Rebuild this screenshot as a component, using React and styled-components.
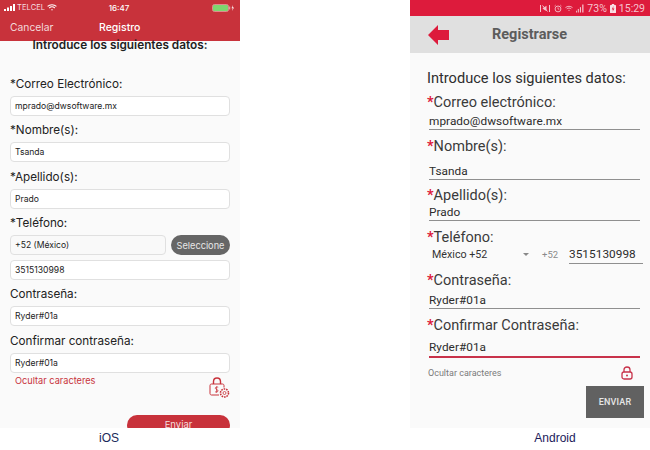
import React from "react";
import styled, { createGlobalStyle } from "styled-components";

const Global = createGlobalStyle`
  html, body { margin: 0; padding: 0; background: #fff; }
  #root { width: 650px; height: 450px; }
  * { box-sizing: border-box; }
`;

const Page = styled.div`
  width: 650px;
  height: 450px;
  display: flex;
  justify-content: space-between;
  overflow: hidden;
`;
const Column = styled.section`
  width: 240px;
  display: flex;
  flex-direction: column;
`;
const Screen = styled.div`
  height: 428px;
  background: #fafafa;
  overflow: hidden;
  display: flex;
  flex-direction: column;
`;
const Caption = styled.div`
  height: 22px;
  text-align: center;
  font: 12px/21px "Liberation Sans", Arial, sans-serif;
  color: ${p => p.$c};
  padding-right: ${p => p.$pr || 0}px;
  padding-left: ${p => p.$pl || 0}px;
`;

/* iOS */
const IosHeader = styled.header`
  height: 41px;
  background: #c8323b;
  color: #fff;
  flex: none;
  font-family: Inter, sans-serif;
`;
const IosStatus = styled.div`
  height: 14px;
  padding: 1px 6px 0 4px;
  display: grid;
  grid-template-columns: 1fr auto 1fr;
  align-items: center;
  font-size: 7.5px;
`;
const StatusLeft = styled.div`
  display: flex;
  align-items: center;
  gap: 2px;
  letter-spacing: 0.1px;
  color: #f6dfe0;
`;
const StatusTime = styled.div`
  font-weight: 500;
  font-size: 8px;
`;
const StatusRight = styled.div`
  display: flex;
  align-items: center;
  justify-content: flex-end;
`;
const IosNav = styled.div`
  height: 26px;
  padding: 0 0 0 10px;
  display: flex;
  align-items: center;
`;
const NavLink = styled.span`
  width: 89px;
  color: #f3d9da;
  font-size: 10.3px;
`;
const NavTitle = styled.span`
  font-weight: 500;
  font-size: 10.5px;
`;
const IosBody = styled.div`
  flex: 1;
  padding: 0 10px;
  font-family: Inter, sans-serif;
  color: #1f1f1f;
`;
const IosHeading = styled.h1`
  margin: -4px 0 0;
  font-size: 11.8px;
  line-height: 16px;
  font-weight: 600;
  text-align: center;
  height: 40px;
  white-space: nowrap;
`;
const IosField = styled.div`
  margin-top: ${p => p.$mt ?? 7}px;
`;
const IosLabel = styled.label`
  display: block;
  font-size: 11.7px;
  line-height: 15px;
  height: 19px;
  color: #222;
`;
const IosInput = styled.div`
  height: 20px;
  background: ${p => (p.$muted ? "#f9f9f9" : "#fff")};
  border: 1px solid #e0e0e0;
  border-radius: 4px;
  font-size: 8.6px;
  line-height: 18px;
  padding: 0 4px;
  flex: 1;
  color: #222;
  margin-top: ${p => p.$mt || 0}px;
`;
const PhoneRow = styled.div`
  display: flex;
  gap: 5px;
`;
const SelectBtn = styled.button`
  width: 59px;
  height: 20px;
  border: 0;
  border-radius: 10px;
  background: #666;
  color: #e6e6e6;
  font: 9.2px Inter, sans-serif;
  padding: 0;
  white-space: nowrap;
`;
const OptionRow = styled.div`
  display: flex;
  justify-content: space-between;
  padding-left: 5px;
  height: 41px;
  margin-top: 1px;
`;
const IosHide = styled.span`
  color: #c8323b;
  font-size: 9.2px;
  line-height: 14px;
`;
const LockSlot = styled.span`
  margin-top: 3px;
`;
const SendRow = styled.div`
  display: flex;
  justify-content: flex-end;
`;
const IosSend = styled.button`
  width: 103px;
  height: 20px;
  border: 0;
  background: #c8323b;
  color: #f5dcdd;
  border-radius: 10px;
  font: 9.5px/16px Inter, sans-serif;
  padding: 0;
`;

/* Android */
const AndStatus = styled.div`
  height: 16px;
  flex: none;
  background: #dd1b3c;
  color: #f6c4ce;
  display: flex;
  justify-content: flex-end;
  align-items: center;
  gap: 3px;
  padding-right: 5px;
  font: 10.5px Roboto, sans-serif;
`;
const AndBar = styled.header`
  height: 37px;
  flex: none;
  background: #e0e0e0;
  display: flex;
  align-items: center;
  padding-left: 18px;
`;
const AndTitle = styled.div`
  margin-left: 43px;
  font: 700 14.5px Roboto, sans-serif;
  color: #5c5c5c;
`;
const AndBody = styled.div`
  flex: 1;
  padding: 0 8px 0 17px;
  font-family: Roboto, sans-serif;
  color: #333;
`;
const AndHeading = styled.h1`
  margin: 17px 0 0;
  font-size: 14.6px;
  line-height: 17px;
  font-weight: 400;
  color: #2e2e2e;
`;
const AndField = styled.div`
  margin-top: ${p => p.$mt}px;
`;
const AndLabel = styled.label`
  display: block;
  font-size: 14.5px;
  line-height: 16px;
  height: 16px;
  color: #3a3a3a;
`;
const Star = styled.span`
  color: #dd1b3c;
  font-weight: 700;
`;
const AndValue = styled.div`
  margin: 0 2px;
  height: ${p => p.$h}px;
  padding-bottom: ${p => (p.$active ? 2 : 1)}px;
  border-bottom: ${p => (p.$active ? "2px solid #c8324a" : "1px solid #8f8f8f")};
  font-size: 11.8px;
  line-height: 14px;
  color: #2c2c2c;
  display: flex;
  align-items: flex-end;
  letter-spacing: 0.05px;
`;
const AndPhone = styled.div`
  display: grid;
  grid-template-columns: 96px 19px 27px 1fr;
  align-items: center;
  height: 19px;
  margin-top: -1px;
  font-size: 10.7px;
`;
const CountryName = styled.span`
  padding-left: 5px;
  color: #333;
`;
const Caret = styled.span`
  width: 0;
  height: 0;
  border-left: 3px solid transparent;
  border-right: 3px solid transparent;
  border-top: 3.5px solid #888;
`;
const Prefix = styled.span`
  color: #8a8a8a;
  font-size: 9.5px;
`;
const AndPhoneValue = styled.span`
  font-size: 11.8px;
  line-height: 18px;
  height: 19px;
  color: #2c2c2c;
  border-bottom: 1px solid #8f8f8f;
  letter-spacing: 0.05px;
  margin-right: -1px;
`;
const AndOptions = styled.div`
  display: flex;
  justify-content: space-between;
  align-items: center;
  height: 16px;
  margin-top: 7px;
  padding: 0 9px 0 1px;
`;
const AndHide = styled.span`
  font-size: 9px;
  color: #7a7a7a;
`;
const AndSendRow = styled.div`
  display: flex;
  justify-content: flex-end;
  margin: 5px -2px 0 0;
`;
const AndSend = styled.button`
  width: 58px;
  height: 32px;
  border: 0;
  background: #616161;
  color: #e6e6e6;
  font: 500 9px Roboto, sans-serif;
  letter-spacing: 0.2px;
  padding: 0;
`;

const Signal = ({ color = "#fff" }) => (
  <svg width="11" height="7" viewBox="0 0 11 7" fill={color}>
    <rect x="0" y="5" width="2" height="2" /><rect x="3" y="3.5" width="2" height="3.5" />
    <rect x="6" y="2" width="2" height="5" /><rect x="9" y="0" width="2" height="7" />
  </svg>
);
const Wifi = ({ color = "#fff", w = 10 }) => (
  <svg width={w} height="7" viewBox="0 0 10 7" fill="none" stroke={color} strokeWidth="1.1">
    <path d="M0.6 2.4C3 0.2 7 0.2 9.4 2.4" /><path d="M2.2 4C3.8 2.6 6.2 2.6 7.8 4" />
    <circle cx="5" cy="5.8" r="0.7" fill={color} stroke="none" />
  </svg>
);
const Battery = () => (
  <svg width="22" height="8" viewBox="0 0 22 8">
    <rect x="0.5" y="0.5" width="16" height="7" rx="2" fill="#7ed66f" stroke="#e08a8e" />
    <rect x="17.2" y="2.5" width="1" height="3" fill="#e9b7b9" />
    <path d="M21 1 L19.5 4.2 H20.8 L20 7 L22 3.4 H20.7 Z" fill="#fff" />
  </svg>
);
const LockGear = () => (
  <svg width="21" height="22" viewBox="0 0 21 22" fill="none" stroke="#c8323b" strokeWidth="1">
    <path d="M4.5 7V4.6C4.5 2.4 6 1 8 1S11.5 2.4 11.5 4.6V7" strokeWidth="1.4" />
    <path d="M10 18H2.5C1.6 18 1 17.4 1 16.5V8.5C1 7.6 1.6 7 2.5 7H13.5C14.4 7 15 7.6 15 8.5V10.5" />
    <path d="M9.2 10.2C8 9.6 6 10 6.4 11.5C6.8 12.8 9 12.3 9 13.8C9 15.2 6.8 15.3 6 14.7M7.6 9.5V15.6" strokeWidth=".8" />
    <circle cx="15.5" cy="16" r="4" strokeWidth="1.6" strokeDasharray="1.6 .9" />
    <circle cx="15.5" cy="16" r="1.5" strokeWidth=".8" />
  </svg>
);
const AndLock = () => (
  <svg width="12" height="14" viewBox="0 0 12 14" fill="none" stroke="#c8324a" strokeWidth="1.3">
    <path d="M3 6V3.8C3 2 4.2 1 6 1S9 2 9 3.8V6" />
    <rect x="1" y="6" width="10" height="7" rx="2" />
    <circle cx="6" cy="9.4" r="1" fill="#c8324a" stroke="none" />
  </svg>
);
const BackArrow = () => (
  <svg width="21" height="20" viewBox="0 0 21 20" fill="#dd1b3c">
    <path d="M0 10 L10 0 V5 H21 V15 H10 V20 Z" />
  </svg>
);
const Mute = () => (
  <svg width="12" height="9" viewBox="0 0 11 9" fill="none" stroke="#f6c4ce" strokeWidth="1">
    <path d="M1 1V8M10 1V8" /><path d="M3 1.5L8 7.5" /><path d="M3 4.5L5 3L7 1.8V7L5 6Z" fill="#f6c4ce" stroke="none" />
  </svg>
);
const Alarm = () => (
  <svg width="8" height="9" viewBox="0 0 9 9" fill="none" stroke="#f6c4ce" strokeWidth="1">
    <circle cx="4.5" cy="5" r="3.3" /><path d="M4.5 3.2V5.2H6M.6 1.8L2 .6M8.4 1.8L7 .6" strokeWidth=".8" />
  </svg>
);
const AndSignal = () => (
  <svg width="8" height="9" viewBox="0 0 9 9" fill="#f6c4ce">
    <rect x="0" y="7" width="1" height="2" /><rect x="2" y="5" width="1.2" height="4" />
    <rect x="4.4" y="3" width="1.2" height="6" /><rect x="7" y="0" width="1.4" height="9" />
  </svg>
);
const AndBattery = () => (
  <svg width="6" height="9" viewBox="0 0 6 9">
    <rect x="0" y="1" width="6" height="8" rx=".6" fill="#f8dfe4" /><rect x="1.8" y="0" width="2.4" height="1" fill="#f8dfe4" />
    <path d="M3.4 2L1.8 5.4H3L2.6 7.8L4.4 4.4H3.2Z" fill="#dd1b3c" />
  </svg>
);

const Ios = () => (
  <Column>
    <Screen>
      <IosHeader>
        <IosStatus>
          <StatusLeft><Signal /><span>TELCEL</span><Wifi /></StatusLeft>
          <StatusTime>16:47</StatusTime>
          <StatusRight><Battery /></StatusRight>
        </IosStatus>
        <IosNav><NavLink>Cancelar</NavLink><NavTitle>Registro</NavTitle></IosNav>
      </IosHeader>
      <IosBody>
        <IosHeading>Introduce los siguientes datos:</IosHeading>
        <IosField $mt={0}><IosLabel>*Correo Electrónico:</IosLabel><IosInput>mprado@dwsoftware.mx</IosInput></IosField>
        <IosField $mt={7}><IosLabel>*Nombre(s):</IosLabel><IosInput>Tsanda</IosInput></IosField>
        <IosField $mt={8}><IosLabel>*Apellido(s):</IosLabel><IosInput>Prado</IosInput></IosField>
        <IosField $mt={7}>
          <IosLabel>*Teléfono:</IosLabel>
          <PhoneRow><IosInput $muted>+52 (México)</IosInput><SelectBtn>Seleccione</SelectBtn></PhoneRow>
          <IosInput $mt={5}>3515130998</IosInput>
        </IosField>
        <IosField $mt={7}><IosLabel>Contraseña:</IosLabel><IosInput>Ryder#01a</IosInput></IosField>
        <IosField $mt={8}><IosLabel>Confirmar contraseña:</IosLabel><IosInput>Ryder#01a</IosInput></IosField>
        <OptionRow>
          <IosHide>Ocultar caracteres</IosHide>
          <LockSlot><LockGear /></LockSlot>
        </OptionRow>
        <SendRow><IosSend>Enviar</IosSend></SendRow>
      </IosBody>
    </Screen>
    <Caption $c="#1a2a5a" $pr={22}>iOS</Caption>
  </Column>
);

const AF = ({ label, h, mt, active, value }) => (
  <AndField $mt={mt}>
    <AndLabel><Star>*</Star>{label}</AndLabel>
    <AndValue $h={h} $active={active}>{value}</AndValue>
  </AndField>
);

const Android = () => (
  <Column>
    <Screen>
      <AndStatus><Mute /><Alarm /><Wifi color="#f6c4ce" w={8} /><AndSignal /><span>73%</span><AndBattery /><span>15:29</span></AndStatus>
      <AndBar><BackArrow /><AndTitle>Registrarse</AndTitle></AndBar>
      <AndBody>
        <AndHeading>Introduce los siguientes datos:</AndHeading>
        <AF label="Correo electrónico:" h={19} mt={8} value="mprado@dwsoftware.mx" />
        <AF label="Nombre(s):" h={25} mt={9} value="Tsanda" />
        <AF label="Apellido(s):" h={17} mt={8} value="Prado" />
        <AndField $mt={9}>
          <AndLabel><Star>*</Star>Teléfono:</AndLabel>
          <AndPhone>
            <CountryName>México +52</CountryName><Caret /><Prefix>+52</Prefix><AndPhoneValue>3515130998</AndPhoneValue>
          </AndPhone>
        </AndField>
        <AF label="Contraseña:" h={20} mt={9} value="Ryder#01a" />
        <AF label="Confirmar Contraseña:" h={24} mt={9} active value="Ryder#01a" />
        <AndOptions><AndHide>Ocultar caracteres</AndHide><AndLock /></AndOptions>
        <AndSendRow><AndSend>ENVIAR</AndSend></AndSendRow>
      </AndBody>
    </Screen>
    <Caption $c="#1a1a5a" $pl={50}>Android</Caption>
  </Column>
);

export default function App() {
  return (
    <>
      <Global />
      <Page><Ios /><Android /></Page>
    </>
  );
}
